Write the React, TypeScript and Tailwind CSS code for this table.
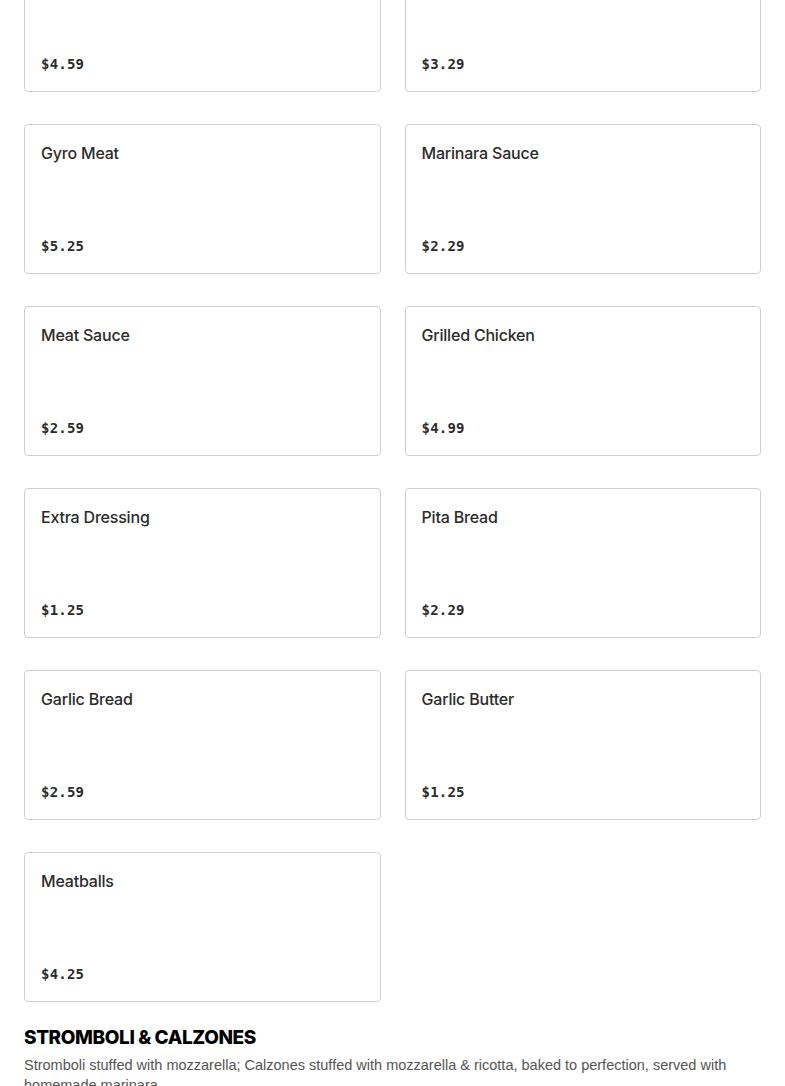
const items = [
  { name: 'Side Salad', price: '$4.59' },
  { name: 'Extra Cheese', price: '$3.29' },
  { name: 'Gyro Meat', price: '$5.25' },
  { name: 'Marinara Sauce', price: '$2.29' },
  { name: 'Meat Sauce', price: '$2.59' },
  { name: 'Grilled Chicken', price: '$4.99' },
  { name: 'Extra Dressing', price: '$1.25' },
  { name: 'Pita Bread', price: '$2.29' },
  { name: 'Garlic Bread', price: '$2.59' },
  { name: 'Garlic Butter', price: '$1.25' },
  { name: 'Meatballs', price: '$4.25' },
]

function ItemCard({ name, price }: { name: string; price: string }) {
  return (
    <div className="h-[150px] flex flex-col justify-between border border-[#cfcfcf] rounded-[4px] bg-white pt-4 px-4 pb-[15px]">
      <div className="text-[16px] leading-6 font-medium text-[#2b2b2b] font-['Inter',sans-serif] tracking-[-0.2px]">{name}</div>
      <div className="text-[14px] leading-6 font-bold text-[#2b2b2b] font-['DejaVu_Sans_Mono',monospace] tracking-[0.2px]">{price}</div>
    </div>
  )
}

export default function App() {
  return (
    <div className="bg-white overflow-hidden h-[1086px]">
      <div className="px-6">
        <div className="grid grid-cols-2 gap-x-6 gap-y-8 -mt-[58px]">
          {items.map(i => <ItemCard key={i.name} {...i} />)}
        </div>

        <h2 className="mt-[22px] text-[19px] leading-7 font-extrabold text-black tracking-[-0.4px] font-['Inter',sans-serif]">
          STROMBOLI &amp; CALZONES
        </h2>
        <p className="mt-[3px] text-[14.5px] leading-5 text-[#555] font-['Liberation_Sans',sans-serif]">
          Stromboli stuffed with mozzarella; Calzones stuffed with mozzarella &amp; ricotta, baked to perfection, served with homemade marinara.
        </p>
      </div>
    </div>
  )
}
